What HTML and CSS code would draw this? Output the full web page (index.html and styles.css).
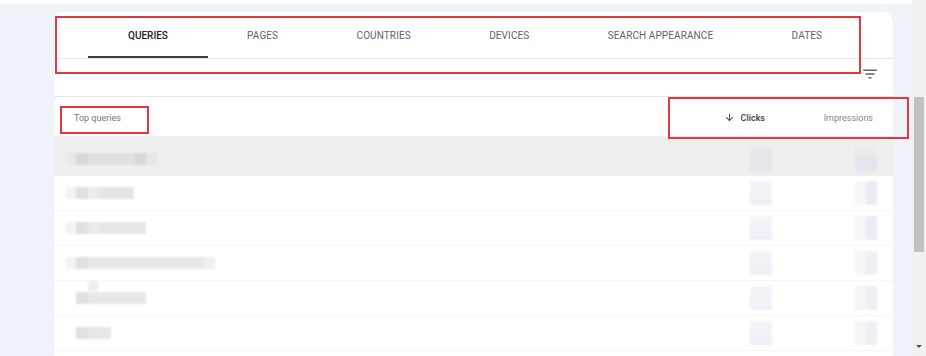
FILE: index.html
```html
<!DOCTYPE html>
<html lang="en">

<head>
  <meta charset="UTF-8">
  <meta name="viewport" content="width=device-width, initial-scale=1.0">
  <title>Performance</title>
  <link rel="stylesheet" href="styles.css">
</head>

<body>
  <div class="page">
    <div class="main">
      <div class="card">
        <div class="tabs">
          <div class="tab active">Queries</div>
          <div class="tab">Pages</div>
          <div class="tab">Countries</div>
          <div class="tab">Devices</div>
          <div class="tab">Search appearance</div>
          <div class="tab">Dates</div>
        </div>

        <div class="toolbar">
          <svg class="filter" viewBox="0 0 24 24" width="18" height="18">
            <path d="M10 18h4v-2h-4v2zM3 6v2h18V6H3zm3 7h12v-2H6v2z" fill="#5f6368" />
          </svg>
        </div>

        <div class="head">
          <div class="name">Top queries</div>
          <div class="num clicks">
            <svg class="arrow" viewBox="0 0 24 24" width="11" height="11">
              <path d="M20 12l-1.41-1.41L13 16.17V4h-2v12.17l-5.58-5.59L4 12l8 8 8-8z" fill="#3c4043" />
            </svg>
            Clicks
          </div>
          <div class="num impr">Impressions</div>
        </div>

        <div class="row hover">
          <div class="name">
            <div class="blob b1"><i class="s1"></i><i class="s2"></i><i class="s3"></i><i class="s4"></i><i class="s5"></i></div>
          </div>
          <div class="num"><div class="cblob"></div></div>
          <div class="num"><div class="iblob"></div></div>
        </div>
        <div class="row">
          <div class="name">
            <div class="blob b2"><i class="s1"></i><i class="s2"></i><i class="s3"></i><i class="s4"></i></div>
          </div>
          <div class="num"><div class="cblob"></div></div>
          <div class="num"><div class="iblob"></div></div>
        </div>
        <div class="row">
          <div class="name">
            <div class="blob b3"><i class="s1"></i><i class="s2"></i><i class="s3"></i><i class="s4"></i></div>
          </div>
          <div class="num"><div class="cblob"></div></div>
          <div class="num"><div class="iblob"></div></div>
        </div>
        <div class="row">
          <div class="name">
            <div class="blob b4"><i class="s1"></i><i class="s2"></i><i class="s3"></i><i class="s4"></i></div>
          </div>
          <div class="num"><div class="cblob"></div></div>
          <div class="num"><div class="iblob soft"></div></div>
        </div>
        <div class="row">
          <div class="name">
            <div class="blob b5"><i class="s2"></i><i class="s3"></i></div>
          </div>
          <div class="num"><div class="cblob"></div></div>
          <div class="num"><div class="iblob soft"></div></div>
        </div>
        <div class="row">
          <div class="name">
            <div class="blob b6"><i class="s2"></i><i class="s3"></i></div>
          </div>
          <div class="num"><div class="cblob"></div></div>
          <div class="num"><div class="iblob soft"></div></div>
        </div>

        <!-- review marks -->
        <div class="mark mark-tabs"></div>
        <div class="mark mark-title"></div>
        <div class="mark mark-cols"></div>
      </div>
    </div>

    <div class="scrollbar">
      <div class="thumb"></div>
      <div class="down"></div>
    </div>
  </div>
</body>

</html>
```

FILE: styles.css
```css
* {
  padding: 0;
  margin: 0;
  box-sizing: border-box;
}

body {
  background-color: #eff3fa;
  font-family: Roboto, 'Liberation Sans', sans-serif;
  overflow: hidden;
  height: 356px;
}

.page {
  display: flex;
  height: 356px;
}

.main {
  flex: 1;
  border-top: 4px solid #fff;
  padding: 8px 19px 0 54px;
}

.card {
  background-color: #fff;
  border-radius: 10px 10px 0 0;
  height: 100%;
  position: relative;
}

/* tabs */
.tabs {
  display: flex;
  height: 47px;
  padding-left: 34px;
  border-bottom: 1px solid #e6e6e6;
}

.tab {
  padding: 1px 39.2px 0;
  line-height: 45px;
  font-size: 10px;
  letter-spacing: 0.1px;
  color: #5f6368;
  text-transform: uppercase;
  white-space: nowrap;
}

.tab.active {
  color: #202124;
  font-weight: 500;
  letter-spacing: 0;
  padding: 1px 40px 0;
  box-shadow: inset 0 -2px 0 #3c4043;
}

.toolbar {
  display: flex;
  justify-content: flex-end;
  align-items: flex-start;
  height: 38px;
  padding: 6px 14px 0 0;
  border-bottom: 1px solid #e6e6e6;
}

/* table */
.head,
.row {
  display: flex;
  align-items: center;
}

.head {
  height: 39px;
  font-size: 9px;
  padding-top: 2px;
}

.head .name {
  padding-left: 20px;
  color: #70757a;
}

.name {
  flex: 1;
  padding-left: 12px;
}

.num {
  width: 105px;
  display: flex;
  align-items: center;
  justify-content: flex-end;
  padding-right: 16px;
}

.head .clicks {
  color: #3c4043;
  font-weight: 500;
  padding-right: 23px;
}

.head .impr {
  color: #80868b;
  padding-right: 20px;
}

.arrow {
  margin-right: 6px;
}

.row {
  height: 35px;
  border-bottom: 1px solid #f5f5f5;
}

.row.hover {
  height: 40px;
  padding-top: 6px;
  background-color: #efefef;
  border-bottom: none;
}

/* blurred cells */
.blob {
  display: flex;
  height: 12px;
  filter: blur(1.3px);
  position: relative;
}

.blob i {
  display: block;
  height: 12px;
}

.blob .s1 { width: 10px; background: #f3f3f3; }
.blob .s2 { width: 12px; background: #e0e0e0; }
.blob .s3 { width: 12px; background: #ebebeb; }
.blob .s4 { width: 34px; background: #e5e5e5; }
.blob .s5 { width: 11px; background: #e6e6e6; }

.b1 .s1 { background: #e8e8e8; }
.b1 .s2 { background: #d8d8d8; }
.b1 .s3 { width: 47px; background: #e0e0e0; }
.b1 .s4 { width: 11px; background: #d8d8d8; }

.b3 .s4 { width: 46px; }

.b4 .s3 { width: 116px; background: #e8e8e8; }
.b4 .s4 { width: 11px; background: #f0f0f0; }

.b5 { margin-left: 10px; }
.b5 .s3 { width: 58px; background: #e8e8e8; }
.b5::before {
  content: "";
  position: absolute;
  left: 12px;
  top: -11px;
  width: 10px;
  height: 10px;
  background: #eeeeee;
}

.b6 { margin-left: 10px; }
.b6 .s3 { width: 23px; background: #e7e7e7; }

.cblob {
  width: 22px;
  height: 24px;
  background: linear-gradient(#f4f5f9, #eef0f7);
  filter: blur(1px);
}

.iblob {
  width: 22px;
  height: 24px;
  background: linear-gradient(90deg, #f8f5f8 50%, #eee9f4 50%);
  filter: blur(1px);
}

.iblob.soft {
  background: linear-gradient(90deg, #f7f3f7 50%, #f2eef5 50%);
}

.hover .cblob {
  background: linear-gradient(#e6e8ec, #e2e5ea);
}

.hover .iblob {
  background: linear-gradient(#ebebeb 40%, #e7e2ee 40%);
}

/* red annotation boxes */
.mark {
  position: absolute;
  border: 2px solid #e2383f;
}

.mark-tabs {
  left: 1px;
  top: 4px;
  width: 806px;
  height: 58px;
}

.mark-title {
  left: 6px;
  top: 94px;
  width: 89px;
  height: 28px;
}

.mark-cols {
  left: 614px;
  top: 85px;
  width: 241px;
  height: 42px;
}

/* fake scrollbar */
.scrollbar {
  width: 14px;
  background-color: #f1f1f1;
  display: flex;
  flex-direction: column;
  align-items: center;
}

.thumb {
  width: 10px;
  height: 155px;
  margin-top: 97px;
  background-color: #c1c1c1;
}

.down {
  margin-top: auto;
  margin-bottom: 8px;
  border-left: 3px solid transparent;
  border-right: 3px solid transparent;
  border-top: 3px solid #505050;
}
```
